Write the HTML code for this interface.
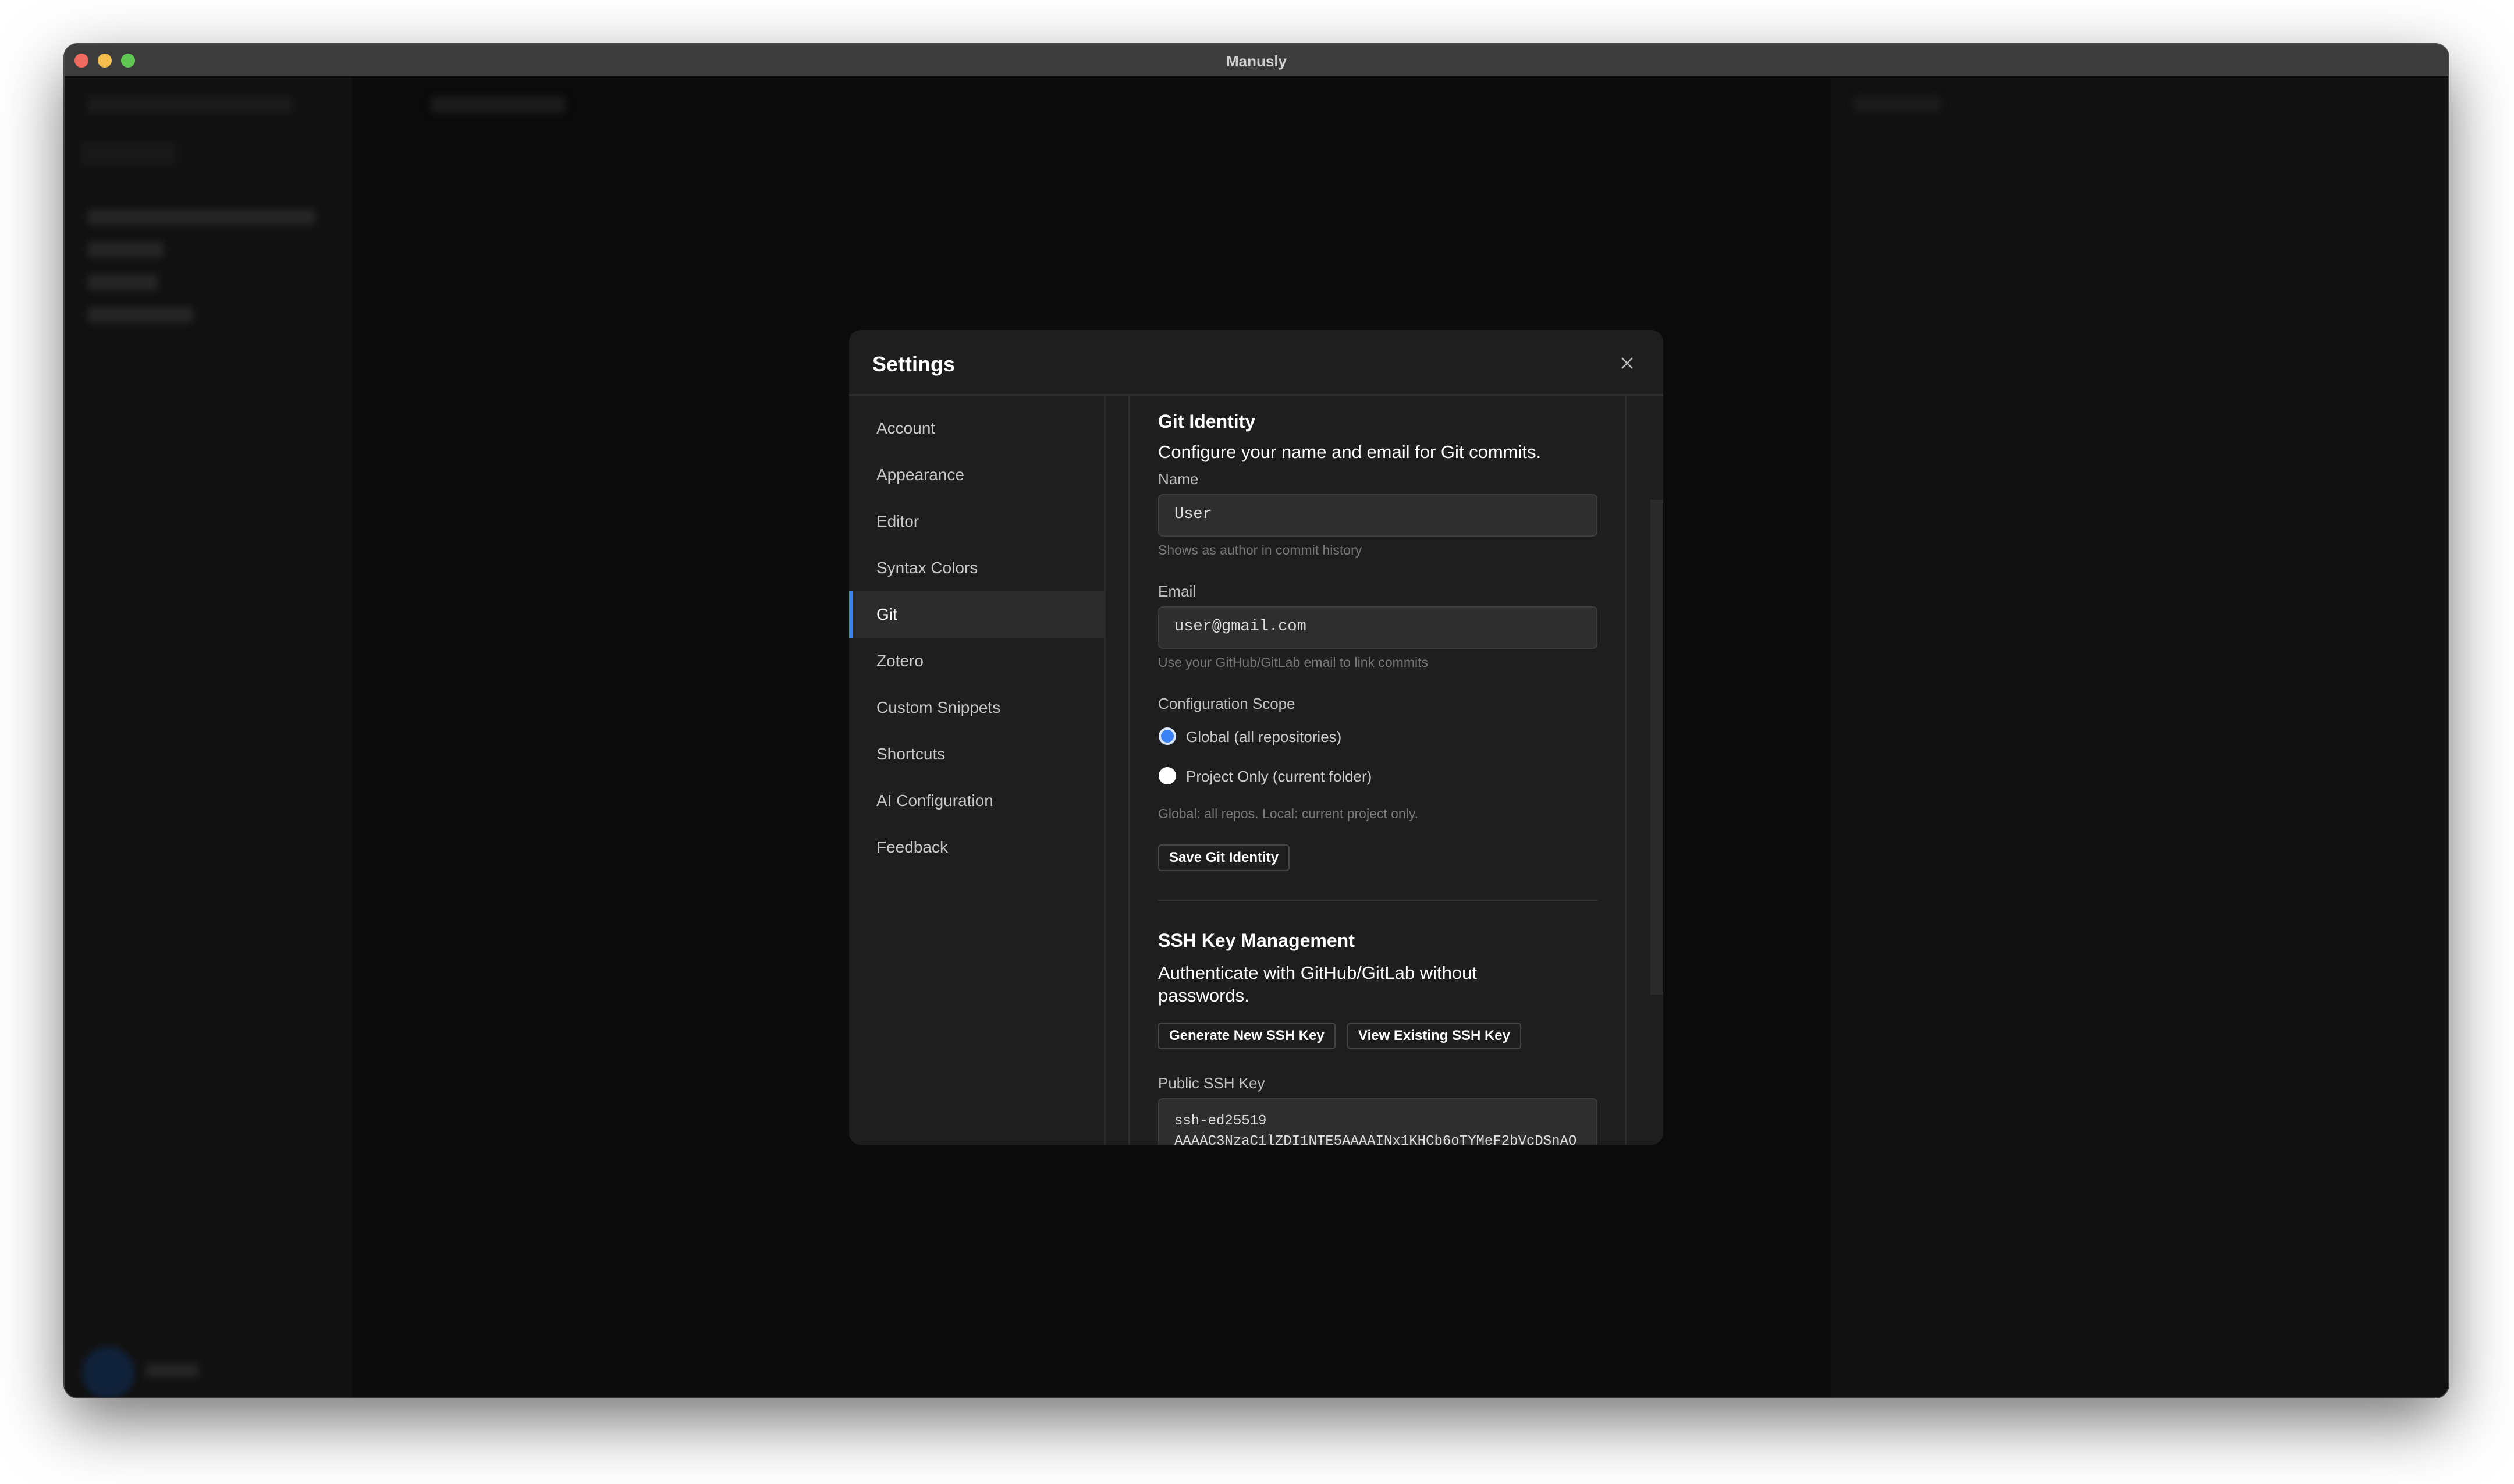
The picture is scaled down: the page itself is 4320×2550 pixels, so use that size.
<!DOCTYPE html>
<html><head><meta charset="utf-8"><style>
*{box-sizing:border-box;margin:0;padding:0}
body{width:4320px;height:2550px;background:#fff;position:relative;overflow:hidden;font-family:"Liberation Sans",sans-serif}
.win{position:absolute;left:111px;top:76px;width:4096px;height:2325px;border-radius:22px;overflow:hidden;background:#0b0b0b;box-shadow:0 40px 110px rgba(0,0,0,.55),0 0 0 2px #555}
.tb{position:absolute;left:0;top:0;right:0;height:56px;background:#3c3c3c;border-bottom:2px solid #111}
.dot{position:absolute;top:16px;width:24px;height:24px;border-radius:50%}
.ttl{position:absolute;left:0;right:0;top:14px;text-align:center;color:#cfcfcf;font-size:26px;font-weight:bold}
.side{position:absolute;left:0;top:58px;width:494px;bottom:0;background:#121212}
.right{position:absolute;left:3034px;top:58px;right:0;bottom:0;background:#111}
.blur{position:absolute;background:#262626;filter:blur(6px);border-radius:4px}
.dlg{position:absolute;left:1459px;top:567px;width:1399px;height:1400px;background:#1e1e1e;border-radius:20px;overflow:hidden;color:#fff}
.hdr{position:absolute;left:0;top:0;right:0;height:113px;border-bottom:3px solid #2e2e2e}
.hdr h1{position:absolute;left:40px;top:38px;font-size:36px;font-weight:bold}
.nav{position:absolute;left:0;top:113px;width:441px;bottom:0;border-right:3px solid #2c2c2c}
.nav div{position:absolute;left:0;width:438px;height:80px;line-height:80px;padding-left:47px;font-size:28px;color:#c8c8c8}
.nav .act{background:#2c2c2c;color:#fff;border-left:6px solid #3b82f6;padding-left:41px}
.cont{position:absolute;left:480px;top:113px;width:856px;bottom:0;border-left:3px solid #2c2c2c;border-right:3px solid #2c2c2c}
.t{position:absolute;left:48px;white-space:nowrap}
.inp{position:absolute;left:48px;width:755px;height:73px;background:#2e2e2e;border:2px solid #3d3d3d;border-radius:8px;font-family:"Liberation Mono",monospace;font-size:27px;color:#ddd;padding:18px 0 0 26px}
.lbl{font-size:26px;color:#c0c0c0}
.hint{font-size:23px;color:#787878}
.btn{position:absolute;height:46px;border:2px solid #444;border-radius:6px;font-size:24px;font-weight:bold;line-height:42px;padding:0 17px;color:#fff;background:#1e1e1e;white-space:nowrap}
.radio{position:absolute;left:49px;width:30px;height:30px;border-radius:50%}
</style></head><body>
<div class="win">
 <div class="tb">
  <div class="dot" style="left:17px;background:#ee6a5f"></div>
  <div class="dot" style="left:57px;background:#f5bf4f"></div>
  <div class="dot" style="left:97px;background:#61c554"></div>
  <div class="ttl">Manusly</div>
 </div>
 <div class="side">
  <div class="blur" style="left:30px;top:110px;width:160px;height:40px;background:#191919"></div>
  <div class="blur" style="left:40px;top:226px;width:390px;height:26px"></div>
  <div class="blur" style="left:40px;top:282px;width:130px;height:26px"></div>
  <div class="blur" style="left:40px;top:338px;width:120px;height:26px"></div>
  <div class="blur" style="left:40px;top:394px;width:180px;height:26px"></div>
  <div class="blur" style="left:30px;top:2180px;width:90px;height:90px;border-radius:50%;background:#10223a"></div>
  <div class="blur" style="left:140px;top:2210px;width:90px;height:22px"></div>
 </div>
 <div class="blur" style="left:40px;top:90px;width:350px;height:28px;background:#1c1c1c"></div>
 <div class="blur" style="left:630px;top:90px;width:230px;height:28px;background:#1c1c1c"></div>
 <div class="right">
  <div class="blur" style="left:40px;top:32px;width:150px;height:26px;background:#1c1c1c"></div>
 </div>
</div>
<div class="dlg">
 <div class="hdr"><h1>Settings</h1>
  <svg style="position:absolute;left:1326px;top:46px" width="22" height="22" viewBox="0 0 22 22"><path d="M2 2L20 20M20 2L2 20" stroke="#bbb" stroke-width="2.5"/></svg>
 </div>
 <div class="nav">
  <div style="top:16px">Account</div>
  <div style="top:96px">Appearance</div>
  <div style="top:176px">Editor</div>
  <div style="top:256px">Syntax Colors</div>
  <div class="act" style="top:336px">Git</div>
  <div style="top:416px">Zotero</div>
  <div style="top:496px">Custom Snippets</div>
  <div style="top:576px">Shortcuts</div>
  <div style="top:656px">AI Configuration</div>
  <div style="top:736px">Feedback</div>
 </div>
 <div class="cont">
  <div class="t" style="top:26px;font-size:32px;font-weight:bold">Git Identity</div>
  <div class="t" style="top:79px;font-size:31px">Configure your name and email for Git commits.</div>
  <div class="t lbl" style="top:128px">Name</div>
  <div class="inp" style="top:169px">User</div>
  <div class="t hint" style="top:252px">Shows as author in commit history</div>
  <div class="t lbl" style="top:321px">Email</div>
  <div class="inp" style="top:362px">user@gmail.com</div>
  <div class="t hint" style="top:445px">Use your GitHub/GitLab email to link commits</div>
  <div class="t lbl" style="top:514px">Configuration Scope</div>
  <div class="radio" style="top:570px;background:#3b82f6;border:4px solid #dbe8ff"></div>
  <div class="t" style="left:96px;top:571px;font-size:26px;color:#ccc">Global (all repositories)</div>
  <div class="radio" style="top:638px;background:#fff"></div>
  <div class="t" style="left:96px;top:639px;font-size:26px;color:#ccc">Project Only (current folder)</div>
  <div class="t hint" style="top:705px">Global: all repos. Local: current project only.</div>
  <div class="btn" style="left:48px;top:771px">Save Git Identity</div>
  <div style="position:absolute;left:48px;top:866px;width:755px;height:2px;background:#333"></div>
  <div class="t" style="top:918px;font-size:32px;font-weight:bold">SSH Key Management</div>
  <div class="t" style="top:972px;font-size:31px;line-height:39px">Authenticate with GitHub/GitLab without<br>passwords.</div>
  <div class="btn" style="left:48px;top:1077px">Generate New SSH Key</div>
  <div class="btn" style="left:373px;top:1077px">View Existing SSH Key</div>
  <div class="t lbl" style="top:1166px">Public SSH Key</div>
  <div class="inp" style="top:1207px;height:200px;font-size:24px;line-height:35px;padding-top:20px">ssh-ed25519<br>AAAAC3NzaC1lZDI1NTE5AAAAINx1KHCb6oTYMeF2bVcDSnAO</div>
 </div>
 <div style="position:absolute;left:1377px;top:292px;width:22px;height:850px;background:#2a2a2a"></div>
</div>
</body></html>
